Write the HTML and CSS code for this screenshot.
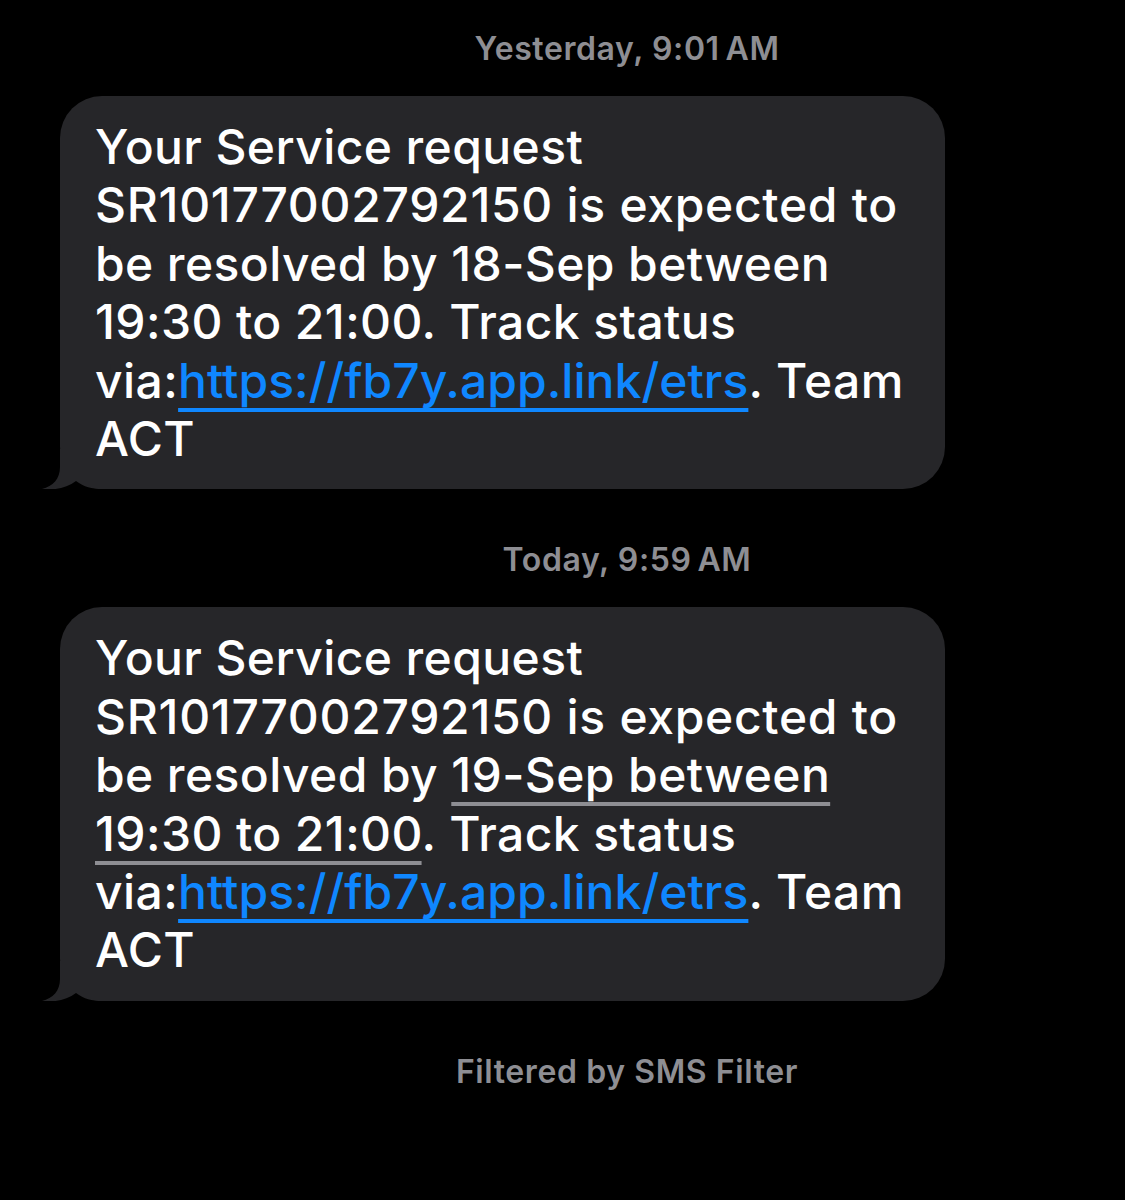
FILE: index.html
```html
<!DOCTYPE html>
<html lang="en">
<head>
<meta charset="utf-8">
<title>Messages</title>
<link rel="stylesheet" href="styles.css">
</head>
<body>
<main class="thread">
  <div class="stamp stamp-first"><span class="day">Yesterday,</span> 9:01&#8201;AM</div>
  <div class="bubble">
    <svg class="tail" width="60" height="40" viewBox="0 0 60 40" aria-hidden="true"><path d="M18 0 L18 18 C18 30 11 37 0 40 C12 41.5 25 39 34 32 C42 38 50 40 60 40 L60 0 Z"/></svg>
    <p class="msg">Your Service request<br><span class="wide">SR10177002792150 is expected to</span><br>be resolved by 18-Sep between<br>19:30 to 21:00. Track status<br>via:<a class="link" href="#">https://fb7y.app.link/etrs</a>. Team<br>ACT</p>
  </div>
  <div class="stamp"><span class="day">Today,</span> 9:59&#8201;AM</div>
  <div class="bubble">
    <svg class="tail" width="60" height="40" viewBox="0 0 60 40" aria-hidden="true"><path d="M18 0 L18 18 C18 30 11 37 0 40 C12 41.5 25 39 34 32 C42 38 50 40 60 40 L60 0 Z"/></svg>
    <p class="msg">Your Service request<br><span class="wide">SR10177002792150 is expected to</span><br>be resolved by <span class="date">19-Sep between</span><br><span class="date">19:30 to 21:00</span>. Track status<br>via:<a class="link" href="#">https://fb7y.app.link/etrs</a>. Team<br>ACT</p>
  </div>
  <div class="stamp stamp-footer">Filtered by SMS Filter</div>
</main>
</body>
</html>
```

FILE: styles.css
```css
html, body {
  margin: 0;
  padding: 0;
  background: #000;
}

body {
  width: 1125px;
  height: 1200px;
  overflow: hidden;
  font-family: "Inter", "Liberation Sans", sans-serif;
  color: #fff;
}

.thread {
  display: flex;
  flex-direction: column;
  padding-top: 29px;
}

.stamp {
  padding-left: 129px;
  text-align: center;
  font-size: 32px;
  line-height: 40px;
  font-weight: 600;
  letter-spacing: 0.6px;
  color: #8e8e93;
  margin-bottom: 27px;
}

.stamp-footer {
  margin-bottom: 0;
}

.bubble {
  position: relative;
  margin-left: 60px;
  width: 885px;
  box-sizing: border-box;
  background: #262629;
  border-radius: 42px;
  padding: 22px 30px 21px 35px;
  margin-bottom: 51px;
}

.msg {
  position: relative;
  margin: 0;
  font-size: 48px;
  line-height: 58.4px;
  font-weight: 500;
  white-space: nowrap;
  letter-spacing: 0.4px;
}

.wide {
  letter-spacing: 0.7px;
}

.link {
  color: #0f87ff;
  letter-spacing: 0.05px;
  text-decoration: underline;
  text-decoration-thickness: 4px;
  text-underline-offset: 10px;
}

.date {
  text-decoration: underline;
  text-decoration-color: #8e8e93;
  text-decoration-thickness: 4px;
  text-underline-offset: 10px;
}

.tail {
  position: absolute;
  left: -18px;
  bottom: 0;
  display: block;
}

.tail path {
  fill: #262629;
}
```
